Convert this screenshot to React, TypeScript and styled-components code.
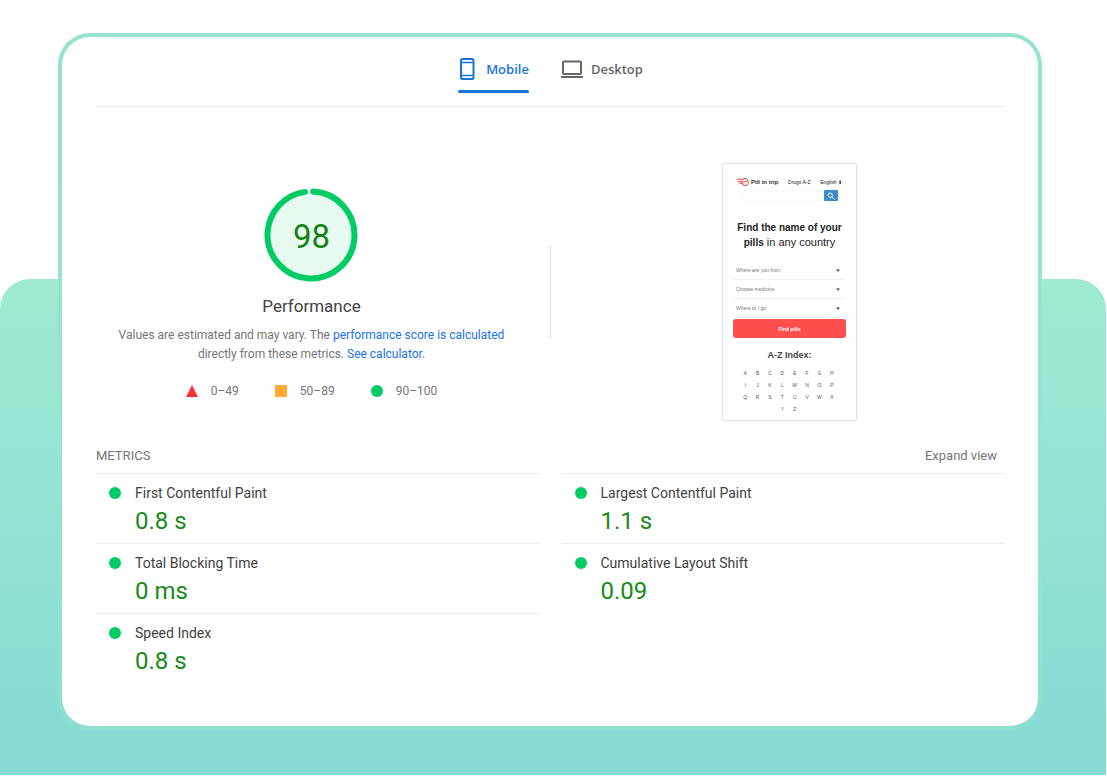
import React from 'react';
import styled, { createGlobalStyle } from 'styled-components';

const GlobalStyle = createGlobalStyle`
  *, *::before, *::after { box-sizing: border-box; }
  body {
    margin: 0;
    background: #fff;
    color: #424242;
    font-family: Roboto, 'Liberation Sans', sans-serif;
  }
  h1, h2, p, ul, dl, dd { margin: 0; padding: 0; }
  ul { list-style: none; }
  button, input, select { font: inherit; color: inherit; }
  a { text-decoration: none; color: inherit; }
`;

const Page = styled.div`
  display: grid;
  min-height: 100vh;
`;

const Backdrop = styled.div`
  grid-area: 1 / 1;
  margin: 279px 1px 1px 0;
  border-radius: 30px 30px 0 0;
  background: linear-gradient(#a0ead3, #85dad3);
`;

const CardFrame = styled.main`
  grid-area: 1 / 1;
  align-self: start;
  margin: 33px 65px 46px 58px;
  padding: 4px;
  border-radius: 32px;
  background: linear-gradient(#98e3cf, #98e3d2 60%, #8edfce);
`;

const Card = styled.div`
  padding: 16px 33px 43px 34px;
  border-radius: 28px;
  background: #fff;
`;

const Tabs = styled.div`
  display: flex;
  justify-content: center;
  gap: 32px;
  padding-bottom: 13px;
  border-bottom: 1px solid #ebebeb;
`;

const Tab = styled.button<{ $active?: boolean }>`
  display: grid;
  grid-template-columns: auto auto;
  grid-template-rows: 32px 8px;
  align-items: center;
  column-gap: 8px;
  height: 40px;
  padding: 0;
  border: 0;
  background: none;
  color: ${(p) => (p.$active ? '#1a73d8' : '#666')};
  font: 600 13px/32px 'Open Sans', sans-serif;
  cursor: pointer;
  &::after {
    content: '';
    grid-column: 1 / -1;
    align-self: end;
    height: 3px;
    border-radius: 2px;
    background: ${(p) => (p.$active ? '#1a73d8' : 'transparent')};
  }
`;

const Overview = styled.section`
  display: grid;
  grid-template-columns: 1fr 47px 1fr;
  align-items: center;
  justify-items: center;
  padding: 56px 0 25px;
`;

const Divider = styled.div`
  width: 1px;
  height: 94px;
  background: #e0e0e0;
`;

const Score = styled.div`
  display: flex;
  flex-direction: column;
  align-items: center;
  align-self: start;
  padding-top: 25px;
  text-align: center;
`;

const Gauge = styled.div`
  display: grid;
  place-items: center;
  svg, span { grid-area: 1 / 1; }
  span { padding-top: 3px; color: #188018; font-size: 33px; line-height: 40px; }
`;

const Title = styled.h1`
  margin-top: 12px;
  font-size: 17px;
  line-height: 24px;
  font-weight: 400;
`;

const Note = styled.p`
  max-width: 420px;
  margin-top: 8px;
  color: #757575;
  font-size: 12px;
  line-height: 19px;
`;

const NoteLink = styled.a`
  color: #1a73e8;
`;

const Legend = styled.ul`
  display: flex;
  gap: 36px;
  margin-top: 18px;
  color: #757575;
  font-size: 12px;
  line-height: 18px;
  li { display: flex; align-items: center; gap: 13px; }
`;

const MetricsHead = styled.div`
  display: flex;
  justify-content: space-between;
  padding: 1px 8px 8px 0;
  color: #757575;
  font-size: 13px;
  line-height: 18px;
`;

const MetricsTitle = styled.h2`
  font-size: 13px;
  font-weight: 400;
`;

const ExpandButton = styled.button`
  padding: 0;
  border: 0;
  background: none;
  cursor: pointer;
`;

const MetricsGrid = styled.div`
  display: grid;
  grid-template-columns: 1fr 1fr;
  gap: 22px;
`;

const Metric = styled.dl`
  display: grid;
  grid-template-columns: 12px 1fr;
  column-gap: 14px;
  align-items: center;
  align-content: start;
  height: 70px;
  padding: 9px 0 0 13px;
  border-top: 1px solid #ebebeb;
  dt { font-size: 14px; line-height: 20px; }
  dd { grid-column: 2; color: #188a18; font-size: 24px; line-height: 36px; }
`;

const Dot = styled.span`
  width: 12px;
  height: 12px;
  border-radius: 50%;
  background: #0c6;
`;

const Phone = styled.div`
  width: 135px;
  height: 258px;
  padding: 12px 10px 0;
  border: 1px solid #e2e2e2;
  border-radius: 2px;
  background: #fff;
  box-shadow: 0 0 2px #e8e8e8;
  font-family: 'Liberation Sans', sans-serif;
  color: #222;
`;

const SiteBar = styled.div`
  display: flex;
  align-items: center;
  justify-content: space-between;
  height: 11px;
  padding: 0 4px 0 3px;
  font-size: 5px;
  line-height: 8px;
`;

const Brand = styled.a`
  display: flex;
  align-items: center;
  gap: 2px;
  font-size: 6px;
  font-weight: 700;
  color: #333;
`;

const Search = styled.form`
  display: flex;
  justify-content: flex-end;
  margin: 3px 8px 0;
  input {
    flex: 1;
    min-width: 0;
    height: 11px;
    padding: 0;
    border: 1px solid #f7f7f7;
    font-size: 5px;
  }
  button {
    display: grid;
    place-items: center;
    width: 14px;
    height: 11px;
    padding: 0;
    border: 0;
    border-radius: 1px;
    background: #3a8bc8;
  }
`;

const Headline = styled.p`
  margin: 19px 0 11px;
  font-size: 11px;
  line-height: 15px;
  text-align: center;
  white-space: nowrap;
  b { font-size: 10px; }
`;

const Field = styled.label`
  display: flex;
  align-items: center;
  height: 19px;
  margin: 0 1px;
  padding: 0 5px 0 2px;
  border-bottom: 1px solid #f0f0f0;
  select {
    flex: 1;
    appearance: none;
    height: 10px;
    padding: 0;
    border: 0;
    background: none;
    color: #777;
    font-size: 5px;
    line-height: 8px;
  }
`;

const FindButton = styled.button`
  display: block;
  width: 100%;
  height: 19px;
  margin-top: 1px;
  padding: 0;
  border: 0;
  border-radius: 3px;
  background: #ff4f4c;
  color: #fff;
  font-size: 5px;
  font-weight: 700;
`;

const IndexTitle = styled.p`
  margin: 10px 0 5px;
  font-size: 9px;
  line-height: 14px;
  font-weight: 700;
  color: #444;
  text-align: center;
`;

const Letters = styled.div`
  display: grid;
  grid-template-columns: repeat(8, 1fr);
  margin: 0 8px 0 6px;
  a { font-size: 5px; line-height: 12px; text-align: center; color: #555; }
  a:nth-child(25) { grid-column: 4; }
`;

const PhoneIcon = () => (
  <svg width="20" height="24" viewBox="0 0 20 24" fill="none" stroke="currentColor" aria-hidden="true">
    <rect x="3" y="2" width="12.500" height="20" rx="1.500" strokeWidth="2" />
    <path d="M3 5.500h12.500M3 18.500h12.500" strokeWidth="1.500" />
  </svg>
);

const LaptopIcon = () => (
  <svg width="22" height="20" viewBox="0 0 22 20" fill="none" stroke="currentColor" strokeWidth="2" aria-hidden="true">
    <rect x="2" y="2.500" width="18" height="12.500" rx="1" />
    <path d="M0 18h22" />
  </svg>
);

const left = [
  ['First Contentful Paint', '0.8 s'],
  ['Total Blocking Time', '0 ms'],
  ['Speed Index', '0.8 s'],
];
const right = [
  ['Largest Contentful Paint', '1.1 s'],
  ['Cumulative Layout Shift', '0.09'],
];

const MetricList = ({ items }: { items: string[][] }) => (
  <div>
    {items.map(([name, value]) => (
      <Metric key={name}>
        <Dot />
        <dt>{name}</dt>
        <dd>{value}</dd>
      </Metric>
    ))}
  </div>
);

const SitePreview = () => (
  <Phone>
    <SiteBar>
      <Brand href="#">
        <svg width="13" height="10" viewBox="0 0 13 10" fill="none" stroke="#e2504c" aria-hidden="true">
          <path d="M.5 2.500c2 .2 3-.8 5-.5l2 1M1.500 4.500h4M3 6l3 .5" />
          <rect x="6" y="1.500" width="6" height="7" rx="2.800" transform="rotate(-15 9 5)" />
          <path d="M6.500 5.500l5-1.500" />
        </svg>
        Pill in trip
      </Brand>
      <a href="#">Drugs A-Z</a>
      <span>English ⬍</span>
    </SiteBar>
    <Search onSubmit={(e) => e.preventDefault()}>
      <input type="search" aria-label="Search" />
      <button aria-label="Search">
        <svg width="8" height="8" viewBox="0 0 8 8" fill="none" stroke="#fff" aria-hidden="true">
          <circle cx="3.200" cy="3.200" r="2.200" />
          <path d="M5 5l2.500 2.500" />
        </svg>
      </button>
    </Search>
    <Headline>
      <b>Find the name of your<br />pills</b> in any country
    </Headline>
    {['Where are you from', 'Choose medicine', 'Where to I go'].map((name) => (
      <Field key={name}>
        <select aria-label={name}>
          <option>{name}</option>
        </select>
        <svg width="4" height="3" viewBox="0 0 4 3" aria-hidden="true">
          <path d="M0 .5h4L2 2.800z" fill="#444" />
        </svg>
      </Field>
    ))}
    <FindButton>Find pills</FindButton>
    <IndexTitle>A-Z Index:</IndexTitle>
    <Letters>
      {'ABCDEFGHIJKLMNOPQRSTUVWXYZ'.split('').map((c) => (
        <a key={c} href="#">{c}</a>
      ))}
    </Letters>
  </Phone>
);

export default function App() {
  return (
    <Page>
      <GlobalStyle />
      <Backdrop />
      <CardFrame>
        <Card>
          <Tabs role="tablist">
            <Tab role="tab" aria-selected="true" $active>
              <PhoneIcon />
              Mobile
            </Tab>
            <Tab role="tab" aria-selected="false">
              <LaptopIcon />
              Desktop
            </Tab>
          </Tabs>
          <Overview>
            <Score>
              <Gauge>
                <svg width="94" height="94" viewBox="0 0 94 94" aria-hidden="true">
                  <circle cx="47" cy="47" r="43.500" fill="#e6faf0" />
                  <circle
                    cx="47"
                    cy="47"
                    r="43.500"
                    fill="none"
                    stroke="#0c6"
                    strokeWidth="6"
                    strokeLinecap="round"
                    pathLength="100"
                    strokeDasharray="97 3"
                    transform="rotate(-87 47 47)"
                  />
                </svg>
                <span>98</span>
              </Gauge>
              <Title>Performance</Title>
              <Note>
                Values are estimated and may vary. The{' '}
                <NoteLink href="#">performance score is calculated</NoteLink>
                <br />
                directly from these metrics. <NoteLink href="#">See calculator.</NoteLink>
              </Note>
              <Legend>
                <li>
                  <svg width="12" height="12" aria-hidden="true"><path d="M6 0l6 12H0z" fill="#f33" /></svg>
                  0–49
                </li>
                <li>
                  <svg width="12" height="12" aria-hidden="true"><path d="M0 0h12v12H0z" fill="#fa3" /></svg>
                  50–89
                </li>
                <li>
                  <Dot />
                  90–100
                </li>
              </Legend>
            </Score>
            <Divider />
            <SitePreview />
          </Overview>
          <MetricsHead>
            <MetricsTitle>METRICS</MetricsTitle>
            <ExpandButton>Expand view</ExpandButton>
          </MetricsHead>
          <MetricsGrid>
            <MetricList items={left} />
            <MetricList items={right} />
          </MetricsGrid>
        </Card>
      </CardFrame>
    </Page>
  );
}
